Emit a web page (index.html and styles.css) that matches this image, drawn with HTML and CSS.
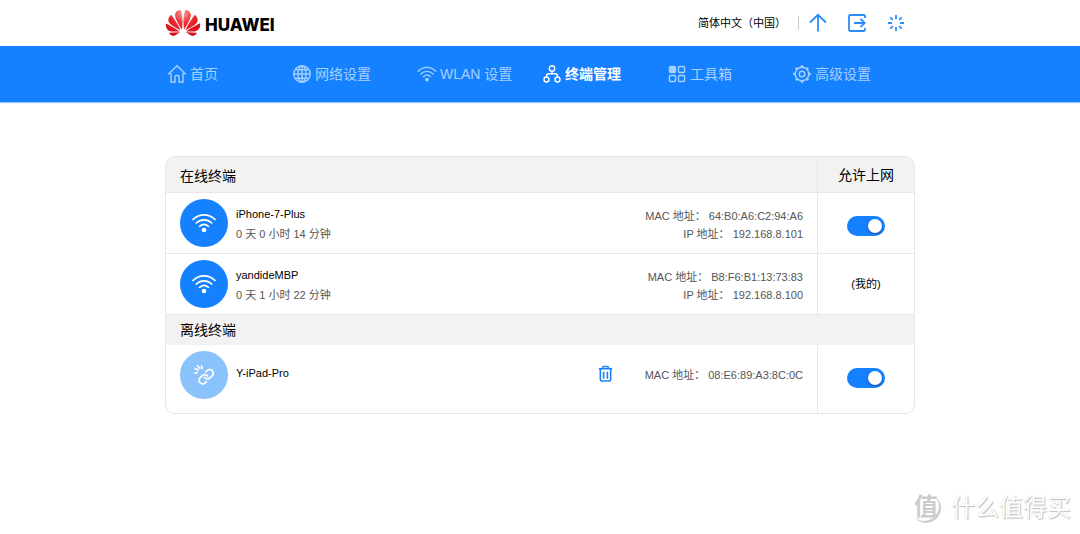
FILE: index.html
```html
<!DOCTYPE html>
<html lang="zh-CN">
<head>
<meta charset="utf-8">
<meta name="viewport" content="width=device-width, initial-scale=1">
<title>终端管理</title>
<link rel="stylesheet" href="styles.css">
</head>
<body>
<svg class="defs" aria-hidden="true">
  <symbol id="wifi" viewBox="0 0 24 20">
    <g fill="none" stroke="currentColor" stroke-width="1.7" stroke-linecap="round">
      <path d="M1 6.5C7.500 .2 16.500 .2 23 6.500"/>
      <path d="M4.300 10C8.800 5.700 15.200 5.700 19.700 10"/>
      <path d="M7.600 13.300C10.300 10.900 13.700 10.900 16.400 13.300"/>
    </g>
    <circle cx="12" cy="17" r="2.300" fill="currentColor"/>
  </symbol>
</svg>

<header class="topbar">
  <div class="wrap topbar-row">
    <a class="brand" href="#">
      <svg class="brand-mark" viewBox="0 2.900 24 18.200" aria-hidden="true">
        <defs>
          <radialGradient id="petal" gradientUnits="userSpaceOnUse" cx="12" cy="5" r="15">
            <stop offset="0" stop-color="#f7a39a"/>
            <stop offset=".45" stop-color="#ee3338"/>
            <stop offset="1" stop-color="#d8101c"/>
          </radialGradient>
        </defs>
        <path fill="url(#petal)" d="M3.67 6.14S1.82 7.91 1.72 9.78v.35c.08 1.51 1.22 2.4 1.22 2.4 1.83 1.79 6.26 4.04 7.3 4.55 0 0 .06.03.1-.01l.02-.04v-.04C7.52 10.8 3.67 6.14 3.67 6.14zM9.65 18.6c-.02-.08-.1-.08-.1-.08l-7.38.26c.8 1.43 2.15 2.53 3.56 2.2.96-.25 3.16-1.78 3.88-2.3.06-.05.04-.09.04-.09zm.08-.78C6.49 15.63.21 12.28.21 12.28c-.15.46-.2.9-.21 1.3v.07c0 1.07.4 1.82.4 1.82.8 1.69 2.34 2.2 2.34 2.2.7.3 1.4.31 1.4.31.12.02 4.4 0 5.54 0 .05 0 .08-.05.08-.05v-.06c0-.03-.03-.05-.03-.05zM9.06 3.19a3.42 3.42 0 00-2.57 3.15v.41c.03.6.16 1.05.16 1.05.66 2.9 3.86 7.65 4.55 8.65.05.05.1.03.1.03a.1.1 0 00.06-.1c1.06-10.6-1.11-13.42-1.11-13.42-.32.02-1.19.23-1.19.23zm8.299 2.27s-.49-1.8-2.44-2.28c0 0-.57-.14-1.17-.22 0 0-2.18 2.81-1.12 13.43.01.07.06.08.06.08.07.03.1-.03.1-.03.72-1.03 3.9-5.76 4.55-8.64 0 0 .36-1.4.02-2.34zm-2.92 13.07s-.07 0-.09.05c0 0-.01.07.03.1.7.51 2.85 2 3.88 2.3 0 0 .16.05.43.06h.14c.69-.02 1.9-.37 3-2.26l-7.4-.25zm7.83-8.41c.14-2.06-1.94-3.97-1.94-3.98 0 0-3.85 4.66-6.67 10.8 0 0-.03.08.02.13l.04.01h.06c1.06-.53 5.46-2.77 7.28-4.54 0 0 1.15-.93 1.21-2.42zm1.52 2.14s-6.28 3.37-9.52 5.55c0 0-.05.04-.03.11 0 0 .03.06.07.06 1.16 0 5.56 0 5.67-.02 0 0 .57-.02 1.27-.29 0 0 1.56-.5 2.37-2.27 0 0 .73-1.45.17-3.14z"/>
      </svg>
      <span class="brand-name">HUAWEI</span>
    </a>
    <div class="tools">
      <button class="language" type="button">简体中文（中国）</button>
      <a class="tool" href="#" aria-label="升级">
        <svg viewBox="0 0 20 20"><path d="M10 18.500V2M2 9.500 10 1.800l8 7.700"/></svg>
      </a>
      <a class="tool" href="#" aria-label="退出">
        <svg viewBox="0 0 20 20"><path d="M18 5V3.200Q18 2 16.800 2H3.200Q2 2 2 3.200v13.600Q2 18 3.200 18h13.600q1.200 0 1.200-1.200V15M7 10h10.500M13.500 5.800 17.700 10l-4.200 4.200"/></svg>
      </a>
      <a class="tool" href="#" aria-label="重启">
        <svg viewBox="0 0 20 20"><path d="M10 2v4M10 14v4M2 10h4M14 10h4M4.300 4.300l2.600 2.600M13.100 13.100l2.600 2.600M4.300 15.700l2.600-2.600M13.100 6.900l2.600-2.600"/></svg>
      </a>
    </div>
  </div>
</header>

<nav class="nav">
  <div class="wrap nav-row">
    <a class="nav-item" href="#">
      <svg viewBox="0 0 20 20"><path d="M1 10.500 10 1.800l9 8.700M4 9v9h4V12.500q0-1 1-1h2q1 0 1 1V18h4V9"/></svg>首页</a>
    <a class="nav-item" href="#">
      <svg viewBox="0 0 20 20"><circle cx="10" cy="10" r="8.300"/><ellipse cx="10" cy="10" rx="4" ry="8.300"/><path d="M10 2v16M2 10h16M3.500 5.800h13M3.500 14.200h13"/></svg>网络设置</a>
    <a class="nav-item" href="#">
      <svg class="nav-wifi"><use href="#wifi"/></svg>WLAN 设置</a>
    <a class="nav-item active" href="#" aria-current="page">
      <svg viewBox="0 0 20 20"><circle cx="10" cy="4.500" r="2.700"/><circle cx="4.500" cy="15.500" r="2.500"/><circle cx="15.500" cy="15.500" r="2.500"/><path d="M10 7.200v2.500M4.500 13v-1Q4.500 9.700 6.800 9.700h6.400q2.300 0 2.300 2.300v1"/></svg>终端管理</a>
    <a class="nav-item" href="#">
      <svg viewBox="0 0 20 20"><rect x="2.500" y="2.500" width="6" height="6" rx="1" fill="currentColor"/><rect x="11.500" y="2.500" width="6" height="6" rx="1"/><rect x="2.500" y="11.500" width="6" height="6" rx="1"/><rect x="11.500" y="11.500" width="6" height="6" rx="1"/></svg>工具箱</a>
    <a class="nav-item" href="#">
      <svg viewBox="0 0 20 20"><circle cx="10" cy="10" r="6.800"/><circle cx="10" cy="10" r="2.800"/><path stroke-width="2.400" d="M10 1.200v2.300M10 16.500v2.300M1.200 10h2.300M16.500 10h2.300M3.800 3.800l1.600 1.600M14.600 14.600l1.600 1.600M3.800 16.200l1.600-1.600M14.600 5.400l1.600-1.600"/></svg>高级设置</a>
  </div>
</nav>

<main class="wrap main">
  <table class="devices">
    <thead>
      <tr>
        <th class="section" scope="col">在线终端</th>
        <th class="access-title" scope="col">允许上网</th>
      </tr>
    </thead>
    <tbody>
      <tr>
        <td>
          <div class="device">
            <span class="badge"><svg class="badge-wifi"><use href="#wifi"/></svg></span>
            <div class="info">
              <div class="name" id="dev-iphone">iPhone-7-Plus</div>
              <div class="time">0 天 0 小时 14 分钟</div>
            </div>
            <div class="address">
              <div>MAC 地址： 64:B0:A6:C2:94:A6</div>
              <div>IP 地址： 192.168.8.101</div>
            </div>
          </div>
        </td>
        <td class="access"><input class="switch" type="checkbox" role="switch" aria-labelledby="dev-iphone" checked></td>
      </tr>
      <tr>
        <td>
          <div class="device">
            <span class="badge"><svg class="badge-wifi"><use href="#wifi"/></svg></span>
            <div class="info">
              <div class="name">yandideMBP</div>
              <div class="time">0 天 1 小时 22 分钟</div>
            </div>
            <div class="address">
              <div>MAC 地址： B8:F6:B1:13:73:83</div>
              <div>IP 地址： 192.168.8.100</div>
            </div>
          </div>
        </td>
        <td class="access">(我的)</td>
      </tr>
    </tbody>
    <tbody class="offline">
      <tr>
        <th class="section" colspan="2" scope="colgroup">离线终端</th>
      </tr>
      <tr>
        <td>
          <div class="device">
            <span class="badge badge-off">
              <svg class="badge-link" viewBox="0 0 24 24">
                <path transform="translate(5 4.500) scale(.78)" stroke-width="2.400" d="M10 13a5 5 0 0 0 7.540.540l3-3a5 5 0 0 0-7.070-7.070l-1.720 1.710M14 11a5 5 0 0 0-7.540-.540l-3 3a5 5 0 0 0 7.070 7.070l1.710-1.710"/>
                <path d="M9.500 2.200l.5 2.600M2.300 4.800l3.400 1.700M2 9.800l2.700-.5M4.900 1.900l2.500 2.600"/>
              </svg>
            </span>
            <div class="info">
              <div class="name" id="dev-ipad">Y-iPad-Pro</div>
            </div>
            <button class="delete" type="button" aria-label="删除">
              <svg viewBox="0 0 16 18"><path d="M1 4h14M5 4V2.500Q5 1.500 6 1.500h4q1 0 1 1V4M2.500 4v11.500Q2.500 17 4 17h8q1.500 0 1.500-1.500V4M6 7v7.500M10 7v7.500"/></svg>
            </button>
            <div class="address">
              <div>MAC 地址： 08:E6:89:A3:8C:0C</div>
            </div>
          </div>
        </td>
        <td class="access"><input class="switch" type="checkbox" role="switch" aria-labelledby="dev-ipad" checked></td>
      </tr>
    </tbody>
  </table>
</main>

<footer class="watermark">
  <span class="seal">值</span>
  <span>什么值得买</span>
</footer>
</body>
</html>
```
FILE: styles.css
```css
* {
  box-sizing: border-box;
}

body {
  margin: 0;
  min-height: 100vh;
  display: flex;
  flex-direction: column;
  background: #fff;
  color: #000;
  font: 11px/18px "Liberation Sans", Arial, "Noto Sans CJK SC", sans-serif;
}

a {
  color: inherit;
  text-decoration: none;
}

button {
  padding: 0;
  border: 0;
  background: none;
  color: inherit;
  font: inherit;
  cursor: pointer;
}

svg {
  display: block;
  flex: none;
}

.defs {
  position: absolute;
  width: 0;
  height: 0;
}

.wrap {
  width: 100%;
  max-width: 750px;
  margin: 0 auto;
}

.topbar-row {
  display: flex;
  align-items: center;
  justify-content: space-between;
  height: 46px;
}

.brand {
  display: flex;
  align-items: center;
  gap: 4px;
}

.brand-mark {
  width: 36px;
  height: 26px;
}

.brand-name {
  padding-top: 4px;
  font: 800 17px/20px Inter, sans-serif;
}

.tools {
  display: flex;
  align-items: center;
  gap: 19px;
  padding-right: 9px;
}

.language {
  height: 14px;
  padding-right: 12px;
  margin-right: -10px;
  border-right: 1px solid #ccc;
  line-height: 14px;
}

.tool svg {
  width: 20px;
  height: 20px;
  fill: none;
  stroke: #2a8bfa;
  stroke-width: 1.8;
}

.nav {
  background: #1681ff;
  box-shadow: 0 1px 1px #9ac8fb;
}

.nav-row {
  display: grid;
  grid-template-columns: repeat(6, 1fr);
  height: 56px;
}

.nav-item {
  display: flex;
  align-items: center;
  gap: 3px;
  padding-left: 2px;
  color: #a5d0ff;
  font-size: 14px;
  white-space: nowrap;
}

.nav-item svg {
  width: 20px;
  height: 20px;
  fill: none;
  stroke: currentColor;
  stroke-width: 1.4;
}

.nav-item .nav-wifi {
  height: 16px;
  stroke: none;
}

.nav-item.active {
  color: #fff;
  font-weight: 700;
}

.main {
  padding-top: 54px;
}

.devices {
  width: 100%;
  overflow: hidden;
  border: 1px solid #e6e6e6;
  border-radius: 10px;
  border-spacing: 0;
}

.devices th,
.devices td {
  padding: 0;
  border-bottom: 1px solid #e8e8e8;
}

.devices th {
  height: 36px;
  background: #f2f2f2;
  font-size: 14px;
  font-weight: 400;
}

.devices .section {
  padding: 2px 14px 0;
  text-align: left;
}

.devices .access-title,
.devices .access {
  width: 97px;
  border-left: 1px solid #e8e8e8;
  text-align: center;
}

.device {
  display: flex;
  align-items: center;
  height: 60px;
  padding: 0 14px;
}

.badge {
  display: flex;
  align-items: center;
  justify-content: center;
  flex: none;
  width: 48px;
  height: 48px;
  border-radius: 50%;
  background: #1681ff;
  color: #fff;
}

.badge-off {
  background: #8ac2fb;
}

.badge-wifi {
  width: 26px;
  height: 20px;
}

.badge-link {
  width: 22px;
  height: 22px;
  fill: none;
  stroke: #fff;
  stroke-width: 1.8;
  stroke-linecap: round;
}

.info {
  flex: 1;
  padding: 2px 0 0 8px;
  line-height: 20px;
}

.time,
.address {
  color: #555;
}

.address {
  padding-top: 4px;
  text-align: right;
}

.delete {
  margin-right: 32px;
}

.delete svg {
  width: 15px;
  height: 17px;
  fill: none;
  stroke: #1a80f8;
  stroke-width: 1.7;
}

.switch {
  display: block;
  width: 38px;
  height: 20px;
  margin: 5px auto 0;
  padding: 3px;
  border-radius: 10px;
  background: #ccc;
  appearance: none;
  cursor: pointer;
}

.switch::before {
  content: "";
  display: block;
  width: 14px;
  height: 14px;
  border-radius: 50%;
  background: #fff;
  box-shadow: 0 1px 2px rgba(0, 0, 0, .4);
}

.switch:checked {
  background: #1681ff;
}

.switch:checked::before {
  margin-left: auto;
}

.offline .section {
  height: 30px;
  padding-top: 0;
}

.offline th,
.offline td {
  border-bottom: 0;
}

.offline td {
  padding-bottom: 8px;
}

.offline .info,
.offline .delete {
  padding: 0 0 4px 8px;
}

.offline .address {
  padding-top: 0;
}

.watermark {
  display: flex;
  align-items: center;
  justify-content: flex-end;
  gap: 10px;
  margin-top: auto;
  padding: 0 9px 10px;
  color: #fff;
  font-size: 24px;
  line-height: 32px;
  text-shadow: 1px 1px 1px #bbb, 0 0 1px #ccc;
}

.seal {
  width: 30px;
  height: 30px;
  border-radius: 50%;
  box-shadow: inset -2px -2px 1px #ccc;
  color: #ccc;
  font-weight: 700;
  line-height: 28px;
  text-align: center;
  text-shadow: none;
}
```
